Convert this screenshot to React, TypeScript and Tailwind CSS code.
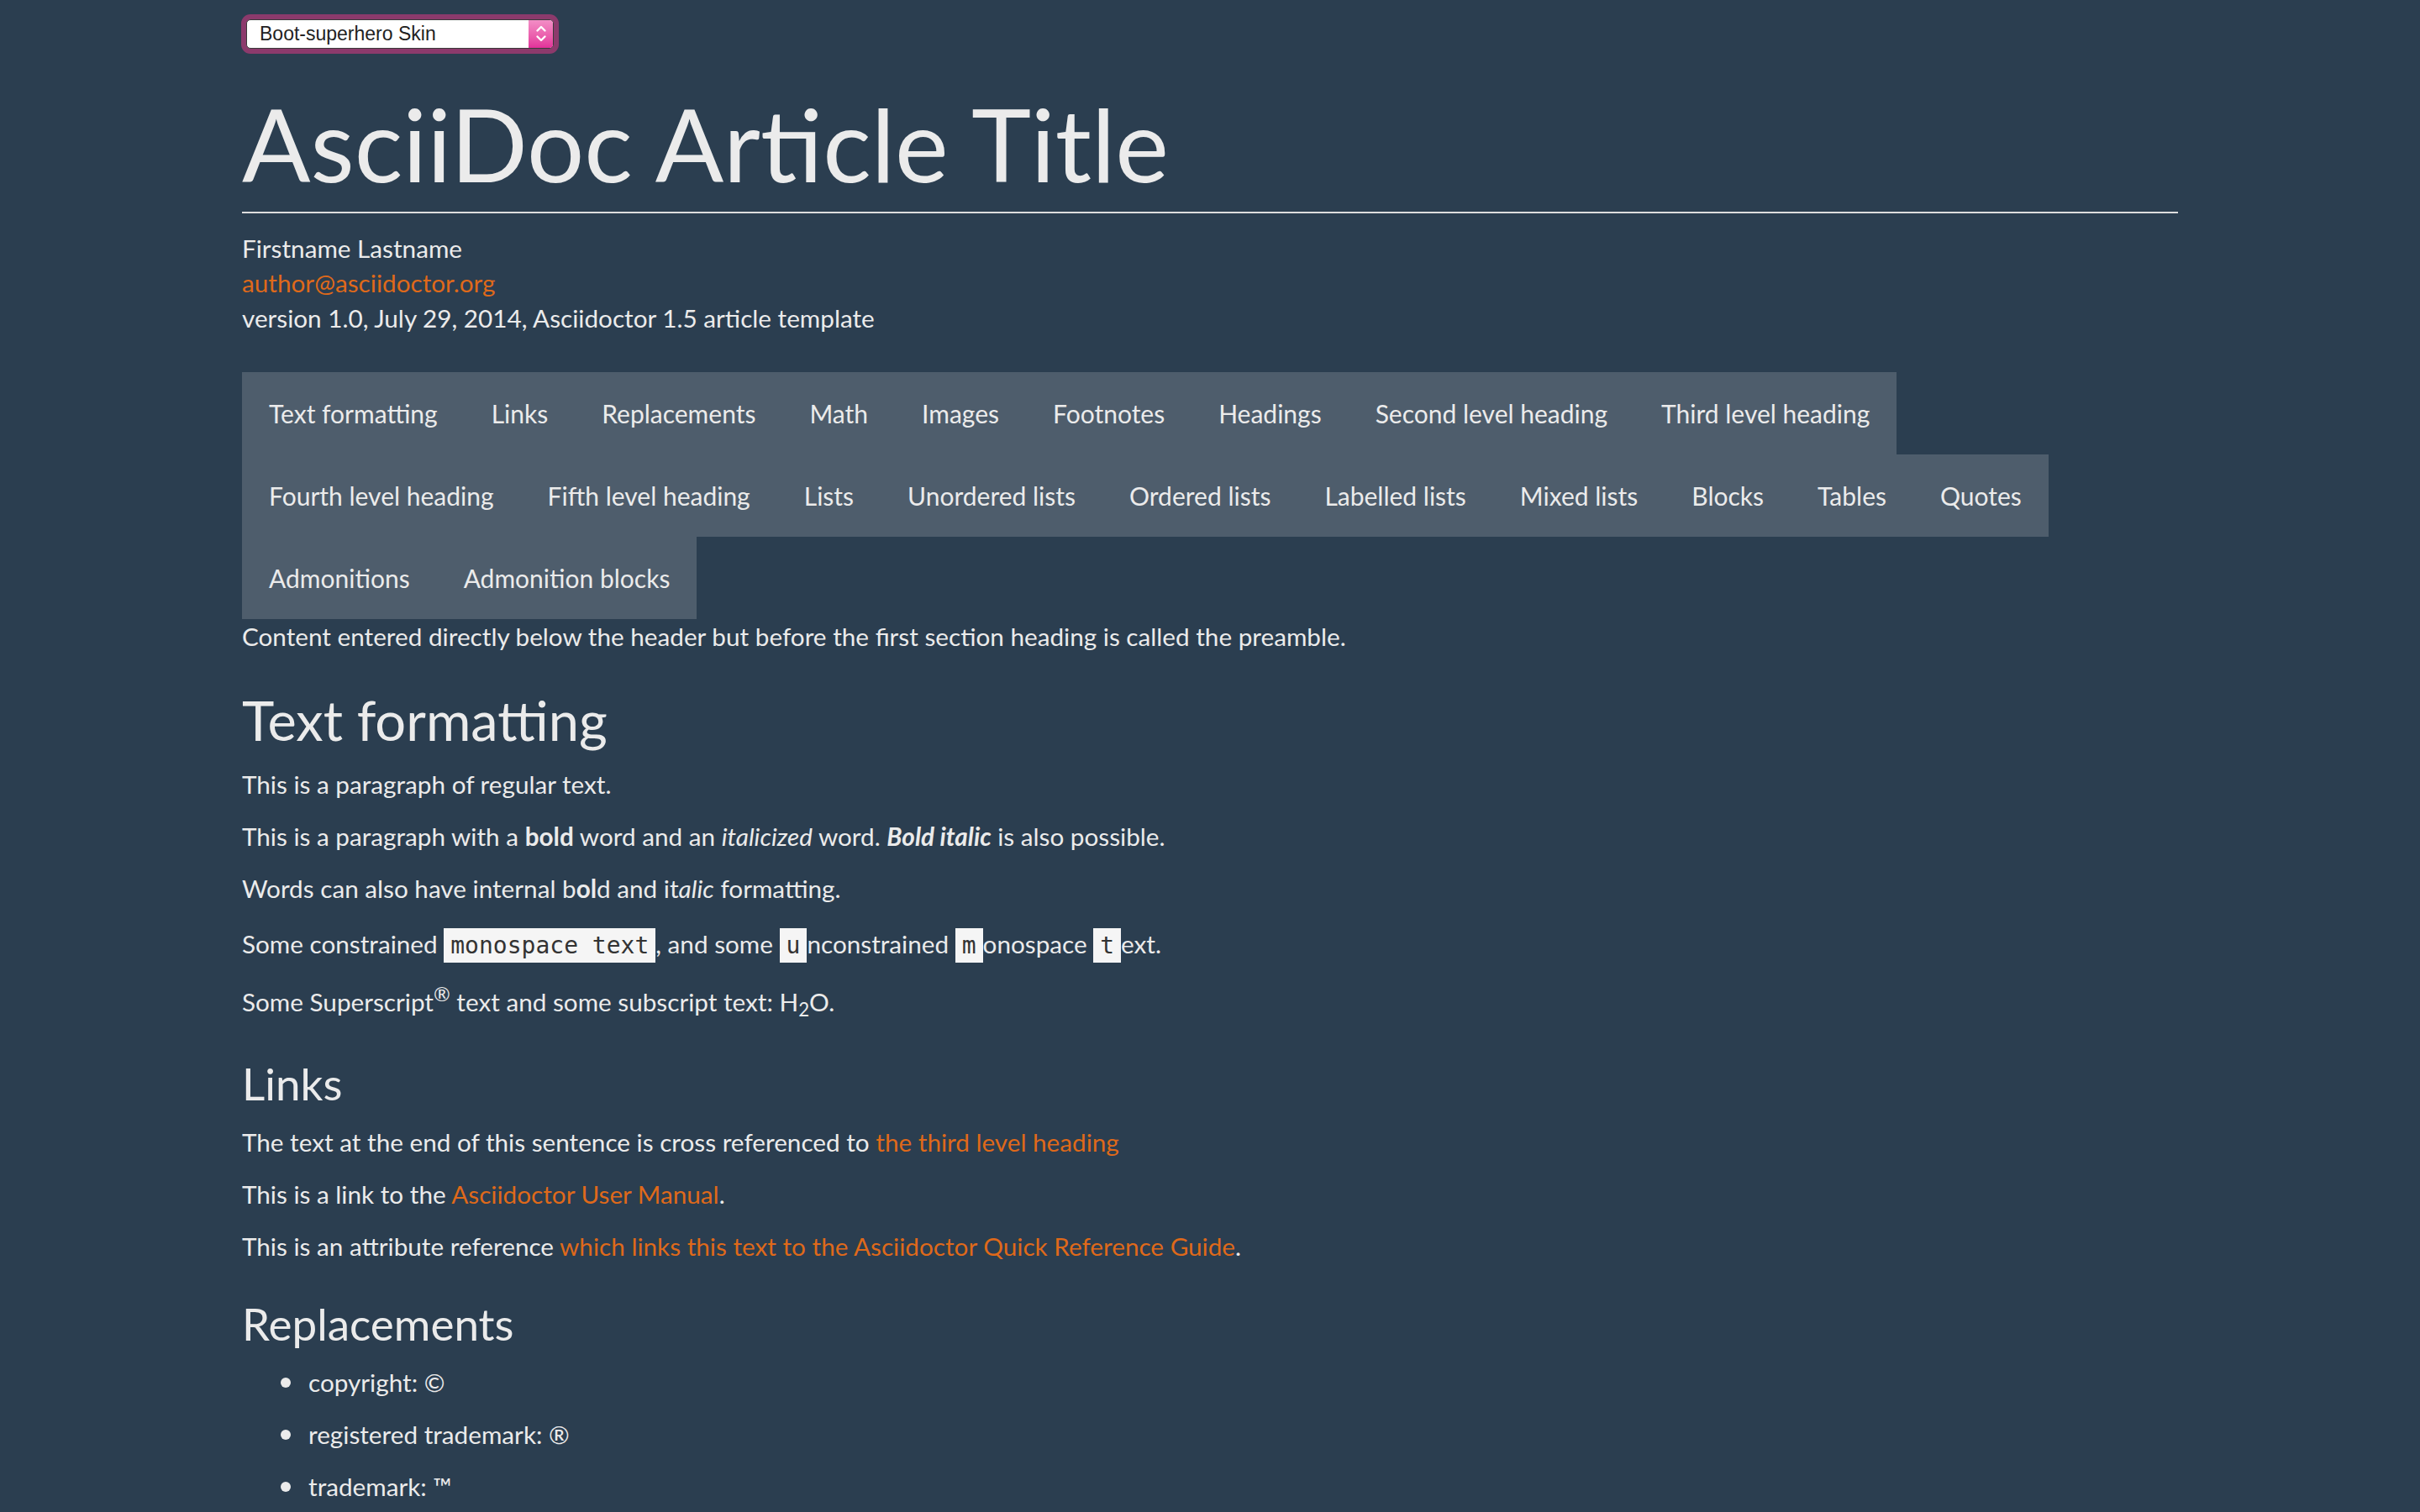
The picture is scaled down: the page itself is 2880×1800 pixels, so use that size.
import React from "react"

const navRows = [
  ["Text formatting", "Links", "Replacements", "Math", "Images", "Footnotes", "Headings", "Second level heading", "Third level heading"],
  ["Fourth level heading", "Fifth level heading", "Lists", "Unordered lists", "Ordered lists", "Labelled lists", "Mixed lists", "Blocks", "Tables", "Quotes"],
  ["Admonitions", "Admonition blocks"],
]

const replacements = ["copyright: ©", "registered trademark: ®", "trademark: ™", "em-dash: —", "ellipses: …"]

function SkinSelect() {
  return (
    <div className="ml-[-1px] inline-flex rounded-[11px] bg-[#8c3a6c] p-[6px]">
      <div className="flex h-[35px] w-[366px] overflow-hidden rounded-[5px] border border-[#3a3a3a] bg-white">
        <div className="flex flex-1 items-center pl-[15px] font-['Liberation_Sans',sans-serif] text-[23px] text-[#222]">
          Boot-superhero Skin
        </div>
        <div className="flex w-[29px] items-center justify-center bg-gradient-to-b from-[#f28dc6] to-[#e2309a]">
          <svg width="14" height="24" viewBox="0 0 14 24" fill="none" stroke="white" strokeWidth="2.4" strokeLinecap="round" strokeLinejoin="round">
            <path d="M2.5 8.5 7 4l4.5 4.5" />
            <path d="M2.5 15.5 7 20l4.5-4.5" />
          </svg>
        </div>
      </div>
    </div>
  )
}

function Code({ children }: { children: React.ReactNode }) {
  return (
    <code className="bg-[#f5f5f5] px-2 py-1 font-['DejaVu_Sans_Mono',monospace] text-[28px] text-[#333]">
      {children}
    </code>
  )
}

function A({ children }: { children: React.ReactNode }) {
  return <a className="text-[#df691a]">{children}</a>
}

export default function App() {
  return (
    <div className="min-h-screen bg-[#2b3e50] font-['Lato',sans-serif] text-[29.7px] leading-[42px] text-[#ebebeb]">
      <div className="mx-auto flex w-[2304px] flex-col pt-[16px] pb-[40px]">
        <div>
          <SkinSelect />
        </div>

        <h1 className="mt-[35px] border-b-2 border-[#dddddd] pb-[9px] text-[120.5px] leading-[144px] font-normal">
          AsciiDoc Article Title
        </h1>

        <div className="mt-[21px] flex flex-col leading-[41.5px]">
          <span>Firstname Lastname</span>
          <A>author@asciidoctor.org</A>
          <span>version 1.0, July 29, 2014, Asciidoctor 1.5 article template</span>
        </div>

        <nav className="mt-[44px] flex flex-col text-[30px]">
          {navRows.map((row, i) => (
            <div key={i} className="flex">
              {row.map((item) => (
                <div key={item} className="bg-[#4e5d6c] px-8 py-7">
                  {item}
                </div>
              ))}
            </div>
          ))}
        </nav>

        <p className="mb-5">
          Content entered directly below the header but before the first section heading is called the preamble.
        </p>

        <h2 className="mt-[19px] mb-[17px] text-[65px] leading-[1.2] font-normal">Text formatting</h2>
        <p className="mb-5">This is a paragraph of regular text.</p>
        <p className="mb-5">
          This is a paragraph with a <b>bold</b> word and an <i>italicized</i> word. <b><i>Bold italic</i></b> is also possible.
        </p>
        <p className="mb-[24px]">
          Words can also have internal b<b>ol</b>d and it<i>alic</i> formatting.
        </p>
        <p className="mb-[25px]">
          Some constrained <Code>monospace text</Code>, and some <Code>u</Code>nconstrained <Code>m</Code>onospace <Code>t</Code>ext.
        </p>
        <p className="mb-5">
          Some Superscript<sup className="text-[0.8em]">®</sup> text and some subscript text: H<sub className="text-[0.75em]">2</sub>O.
        </p>

        <h3 className="mt-[24px] mb-[17px] text-[53px] leading-[1.2] font-normal">Links</h3>
        <p className="mb-5">
          The text at the end of this sentence is cross referenced to <A>the third level heading</A>
        </p>
        <p className="mb-5">
          This is a link to the <A>Asciidoctor User Manual</A>.
        </p>
        <p className="mb-5">
          This is an attribute reference <A>which links this text to the Asciidoctor Quick Reference Guide</A>.
        </p>

        <h3 className="mt-[19px] mb-[18px] text-[53px] leading-[1.2] font-normal">Replacements</h3>
        <ul className="flex flex-col pl-[46px]">
          {replacements.map((r) => (
            <li key={r} className="mb-5 flex items-center gap-[21px]">
              <span className="h-3 w-3 shrink-0 rounded-full bg-[#ebebeb]" />
              <span>{r}</span>
            </li>
          ))}
        </ul>
      </div>
    </div>
  )
}
